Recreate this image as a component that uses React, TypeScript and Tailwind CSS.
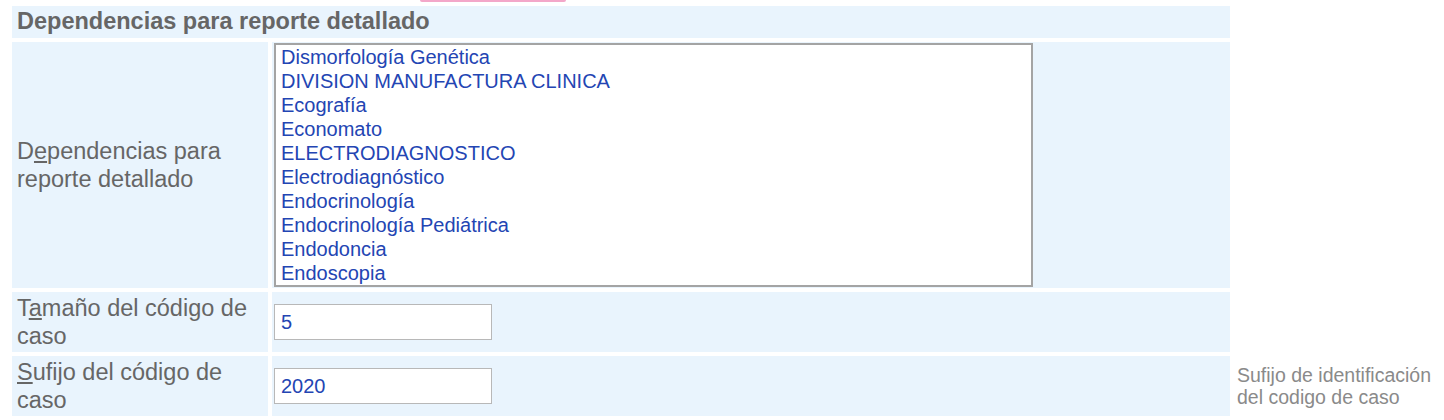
import React from 'react';

const dependencias = [
  'Dismorfología Genética',
  'DIVISION MANUFACTURA CLINICA',
  'Ecografía',
  'Economato',
  'ELECTRODIAGNOSTICO',
  'Electrodiagnóstico',
  'Endocrinología',
  'Endocrinología Pediátrica',
  'Endodoncia',
  'Endoscopia',
];

function Label({ children }: { children: React.ReactNode }) {
  return (
    <div className="bg-[#e9f4fd] px-[5px] flex items-center text-[23.5px] leading-[28px] text-[#666666]">
      <span>{children}</span>
    </div>
  );
}

export default function App() {
  return (
    <div
      className="relative w-[1444px] h-[420px] overflow-hidden bg-white"
      style={{ fontFamily: '"Liberation Sans", Arial, sans-serif' }}
    >
      {/* bottom edge of the button above, cut off */}
      <div className="absolute left-[420px] top-0 w-[146px] h-[2px] rounded-b-md bg-[#f3a7c9]" />

      <div className="grid grid-cols-[256px_958px_1fr] grid-rows-[32px_246px_60px_60px] gap-[4px] pl-[12px] pt-[6px]">
        {/* Header */}
        <div className="col-span-2 bg-[#e9f4fd] px-[5px] flex items-center text-[23.5px] font-bold text-[#666666]">
          Dependencias para reporte detallado
        </div>
        <div />

        {/* Dependencias */}
        <Label>
          D<u>e</u>pendencias para reporte detallado
        </Label>
        <div className="bg-[#e9f4fd] pl-[2px] flex items-center">
          <div className="w-[759px] h-[244px] bg-white border-2 border-[#a4a4a4] overflow-hidden">
            {dependencias.map((d) => (
              <div key={d} className="h-[24px] pl-[5px] text-[20px] leading-[24px] text-[#2345b3] whitespace-nowrap">
                {d}
              </div>
            ))}
          </div>
        </div>
        <div />

        {/* Tamaño */}
        <Label>
          T<u>a</u>maño del código de caso
        </Label>
        <div className="bg-[#e9f4fd] pl-[2px] flex items-center">
          <div className="w-[218px] h-[36px] bg-white border border-[#b8b8b8] pl-[6px] flex items-center text-[20px] text-[#2345b3]">
            5
          </div>
        </div>
        <div />

        {/* Sufijo */}
        <Label>
          <u>S</u>ufijo del código de caso
        </Label>
        <div className="bg-[#e9f4fd] pl-[2px] flex items-center">
          <div className="w-[218px] h-[36px] bg-white border border-[#b8b8b8] pl-[6px] flex items-center text-[20px] text-[#2345b3]">
            2020
          </div>
        </div>
        <div className="flex items-center pl-[3px] text-[19.5px] leading-[22px] text-[#8a8a8a]">
          <span>
            Sufijo de identificación
            <br />
            del codigo de caso
          </span>
        </div>
      </div>
    </div>
  );
}
